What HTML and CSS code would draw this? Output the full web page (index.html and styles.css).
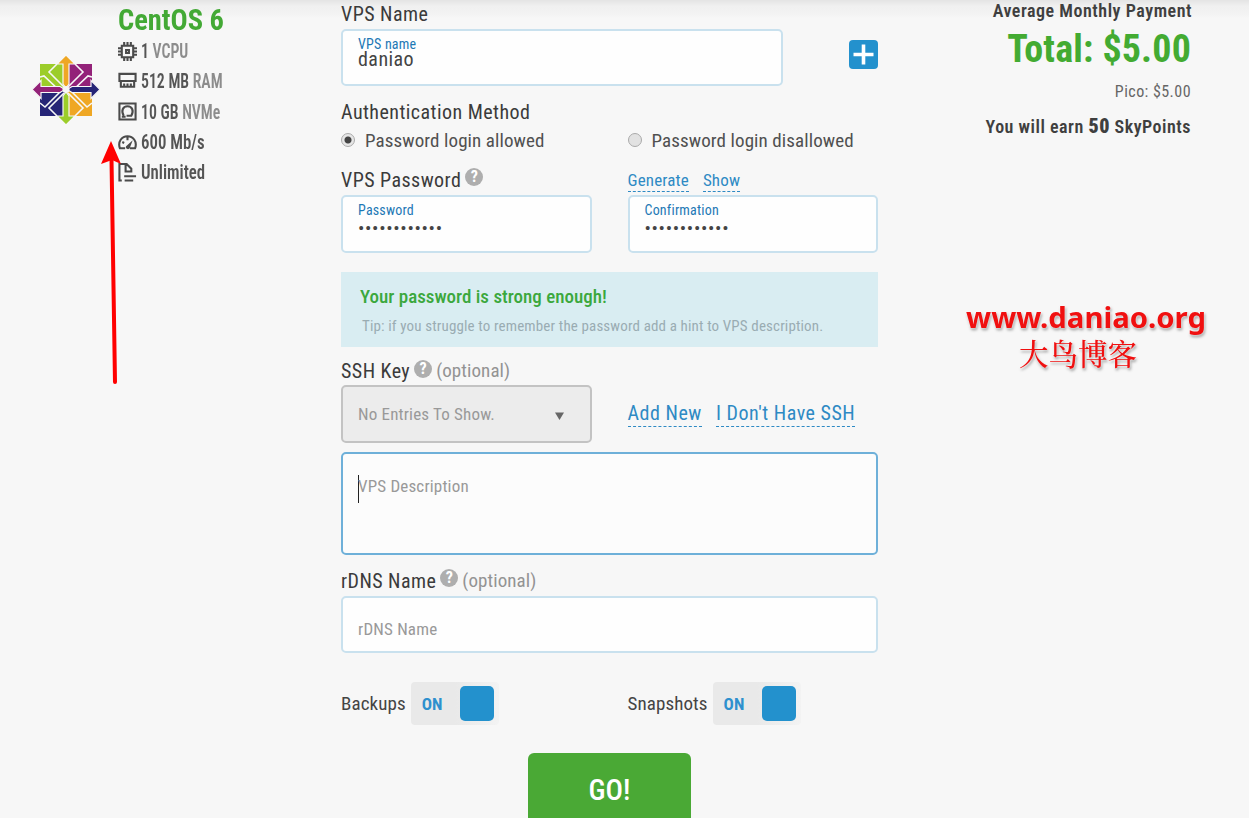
FILE: index.html
```html
<!DOCTYPE html>
<html lang="en">
<head>
<meta charset="utf-8">
<title>Order VPS</title>
<link rel="stylesheet" href="styles.css">
</head>
<body>
<div class="page">
  <aside class="config">
    <svg class="logo" viewBox="0 0 68 70">
      <path fill="#9ccd2a" d="M8 9h25v25H8z"/><path fill="#932279" d="M35 9h25v25H35z"/>
      <path fill="#262577" d="M8 36h25v25H8z"/><path fill="#efa724" d="M35 36h25v25H35z"/>
      <path fill="none" stroke="#f7f7f7" stroke-width="1.600" d="M25 9l-8 8 15 15M43 9l8 8-15 15M25 61l-8-8 15-15M43 61l8-8-15-15M8 22l4-1 16 15M60 22l-4-1-16 15M8 48l5 4 16-16M60 48l-5 4-16-16"/>
      <g stroke="#f7f7f7" stroke-width="1.2">
        <path fill="#efa724" d="M34 0l9 9h-6v20l-3 4-3-4V9h-6z"/>
        <path fill="#262577" d="M68 34.500l-9 9v-6H40l-5-3 5-3h19v-6z"/>
        <path fill="#9ccd2a" d="M34 70l9-9h-6V41l-3-4-3 4v20h-6z"/>
        <path fill="#932279" d="M0 34.500l9-9v6h19l5 3-5 3H9v6z"/>
      </g>
      <circle cx="34" cy="34.500" r="3.500" fill="#f7f7f7"/>
    </svg>
    <div class="specs">
      <h2>CentOS 6</h2>
      <div class="spec">
        <svg viewBox="0 0 20 20"><path fill="none" stroke="#4b4b4b" stroke-width="2.200" d="M4 4h12v12H4zM8.500 8.500h3v3h-3zM6.500 0v3M10 0v3M13.500 0v3M6.500 17v3M10 17v3M13.500 17v3M0 6.500h3M0 10h3M0 13.500h3M17 6.500h3M17 10h3M17 13.500h3"/></svg>
        <p><b>1</b> VCPU</p></div>
      <div class="spec">
        <svg viewBox="0 0 20 20"><path fill="none" stroke="#4b4b4b" stroke-width="2.200" d="M1.500 2h17v7.500h-17zM3 9v6.500h14V9M6.500 12v3M10 12v3M13.500 12v3"/></svg>
        <p><b>512 MB</b> RAM</p></div>
      <div class="spec">
        <svg viewBox="0 0 20 20"><path fill="none" stroke="#4b4b4b" stroke-width="2.200" d="M1.500 1.500h17v17h-17zM6 14.500c-3-5-1-10 4-10s7 5 4 10H9M4 15.500h4"/></svg>
        <p><b>10 GB</b> NVMe</p></div>
      <div class="spec">
        <svg viewBox="0 0 20 20"><path fill="none" stroke="#4b4b4b" stroke-width="2.200" d="M7.500 16H2C-.5 9 4 3.500 10 3.500S20.500 9 18 16h-5.500M4.500 9.500l2 1M10 4.500v3"/><path fill="#4b4b4b" d="M15.500 7.500l-3 8c-1 3-5.500 1-4-1.500z"/></svg>
        <p class="wide"><b>600 Mb/s</b></p></div>
      <div class="spec">
        <svg viewBox="0 0 20 20"><path fill="none" stroke="#4b4b4b" stroke-width="2.200" d="M4 18.500H1.500V1H9l5 5v3H8V1M6.500 14H19M7 18.500h9"/></svg>
        <p class="wide"><b>Unlimited</b></p></div>
    </div>
  </aside>

  <main class="form">
    <label class="label name-label">VPS Name</label>
    <div class="name-row">
      <div class="input"><small>VPS name</small><span class="value">daniao</span></div>
      <button class="add"><svg viewBox="0 0 29 29"><path d="M14.500 4.500v20M4.500 14.500h20" stroke="#fff" stroke-width="3.600"/></svg></button>
    </div>
    <label class="label auth-label">Authentication Method</label>
    <div class="two radios">
      <label><i class="radio on"></i>Password login allowed</label>
      <label><i class="radio"></i>Password login disallowed</label>
    </div>
    <div class="two pass-label">
      <div class="label">VPS Password<i class="help">?</i></div>
      <div class="links small"><a>Generate</a><a>Show</a></div>
    </div>
    <div class="two">
      <div class="input pass"><small>Password</small><span class="dots">••••••••••••</span></div>
      <div class="input pass"><small>Confirmation</small><span class="dots">••••••••••••</span></div>
    </div>
    <div class="alert"><p class="ok">Your password is strong enough!</p><p class="tip">Tip: if you struggle to remember the password add a hint to VPS description.</p></div>
    <div class="label ssh-label">SSH Key<i class="help">?</i><em>(optional)</em></div>
    <div class="two ssh">
      <div class="select"><span>No Entries To Show.</span><svg viewBox="0 0 9 8"><path fill="#666" d="M0 .5h9L4.500 8z"/></svg></div>
      <div class="links"><a>Add New</a><a>I Don't Have SSH</a></div>
    </div>
    <div class="area"><i class="caret"></i><span>VPS Description</span></div>
    <div class="label rdns-label">rDNS Name<i class="help">?</i><em>(optional)</em></div>
    <div class="input rdns"><span>rDNS Name</span></div>
    <div class="two toggles">
      <div class="toggle-row">Backups<div class="toggle"><b>ON</b><i></i></div></div>
      <div class="toggle-row">Snapshots<div class="toggle"><b>ON</b><i></i></div></div>
    </div>
    <button class="go">GO!</button>
  </main>

  <aside class="payment">
    <p class="avg">Average Monthly Payment</p>
    <p class="total">Total: $5.00</p>
    <p class="pico">Pico: $5.00</p>
    <p class="points">You will earn <b>50</b> SkyPoints</p>
  </aside>
</div>
<svg class="arrow" viewBox="0 0 20 244"><path d="M11.500 18L15 241" stroke="#f00" stroke-width="4" stroke-linecap="round"/><path fill="#f00" d="M11 0l10 23-9-4-11 4z"/></svg>
<div class="watermark"><div class="site">www.daniao.org</div><div class="cjk">大鸟博客</div></div>
</body>
</html>
```
FILE: styles.css
```css
* { box-sizing: border-box; margin: 0; padding: 0; }
body {
  width: 1249px; height: 818px; overflow: hidden; position: relative;
  background: linear-gradient(#e4e4e4 0, #f0f0f0 6px, #f3f3f3 14px, #f7f7f7 18px);
  font: 20px/24px "Roboto Condensed", Roboto, sans-serif;
  letter-spacing: .45px; color: #444; white-space: nowrap;
}
i, em { font-style: normal; }
.page { display: grid; grid-template-columns: 341px 537px 313px; }

.config { display: flex; align-items: flex-start; padding-left: 32px; }
.logo { width: 68px; height: 70px; margin-top: 55px; }
.specs { padding: 4px 0 0 18px; }
h2 { font-size: 29px; line-height: 32px; font-weight: 700; color: #43a935; letter-spacing: 0; transform: scaleX(.98); transform-origin: left; }
.spec { display: flex; align-items: center; height: 30.300px; gap: 4px; }
.spec svg { width: 19px; height: 19px; flex: none; }
.spec p { font-size: 21px; color: #8c8c8c; font-weight: 600; letter-spacing: 0; transform: scaleX(.75); transform-origin: left; }
.spec .wide { transform: scaleX(.8); }
.spec b { color: #555; font-weight: 600; }

.form { display: flex; flex-direction: column; }
.label { display: flex; align-items: center; height: 28px; color: #3b3b3b; }
.name-label { height: 29px; padding-bottom: 2px; }
.name-row { display: flex; justify-content: space-between; }
.input { height: 57px; background: #fefefe; border: 2px solid #c9e1ee; border-radius: 5px; padding: 6px 15px; }
.name-row .input { width: 442px; }
.input small { display: block; font-size: 14px; line-height: 15px; color: #1d78b5; letter-spacing: .2px; }
.value { display: block; line-height: 14px; }
.add { width: 29px; height: 29px; margin-top: 11px; border: 0; border-radius: 4px; background: #2391cd; }
.add svg { display: block; }
.auth-label { margin-top: 12px; }
.two { display: grid; grid-template-columns: 250.500px 250.500px; column-gap: 36px; }
.radios { height: 40px; align-items: center; padding-bottom: 10px; color: #505050; font-size: 19px; letter-spacing: .1px; }
.radios label { display: flex; align-items: center; }
.radio { width: 14px; height: 14px; margin: -3px 10px 0 0; border-radius: 50%; border: 1px solid #aaa; background: #e2e2e2; }
.radio.on { background: radial-gradient(#444 0 3px, #e6e6e6 4px); }
.pass-label { height: 29px; }
.help { width: 18px; height: 18px; margin: -7px 4px 0; border-radius: 50%; background: #aeaeae; color: #fff; font-size: 16px; line-height: 18px; font-weight: 700; text-align: center; letter-spacing: 0; }
.ssh-label .help { margin-top: -4px; }
.label em { color: #939393; font-size: 19px; letter-spacing: .1px; }
.links { display: flex; gap: 14px; align-items: center; }
.links a { color: #2e8ac4; line-height: 25px; border-bottom: 1px dashed #2e8ac4; letter-spacing: .52px; }
.links.small a { font-size: 17px; line-height: 22px; letter-spacing: .15px; }
.pass { height: 58px; }
.dots { display: block; font-size: 19px; line-height: 21px; letter-spacing: .65px; }
.alert { height: 75px; margin-top: 19px; padding: 12px 19px; background: #d9edf2; }
.ok { font-size: 19px; line-height: 25px; color: #3ba83d; font-weight: 500; letter-spacing: 0; }
.tip { font-size: 15px; line-height: 34px; color: #9aacb2; padding-left: 2px; letter-spacing: .14px; }
.ssh-label { height: 28px; margin-top: 10px; }
.select { display: flex; justify-content: space-between; align-items: center; height: 58px; border: 2px solid #c3c3c3; border-radius: 5px; background: #ececec; padding: 0 26px 0 15px; font-size: 17px; letter-spacing: .18px; color: #999; }
.select svg { width: 9px; height: 8px; margin-top: 4px; }
.area { display: flex; align-items: flex-start; height: 103px; margin-top: 9px; border: 2px solid #6eb0d9; border-radius: 5px; background: #fcfcfc; padding: 20px 15px; font-size: 17px; letter-spacing: .18px; color: #999; }
.caret { width: 1px; height: 28px; margin: 1px -1px 0 0; background: #222; }
.rdns-label { margin-top: 12px; }
.rdns { padding: 19px 15px; margin-top: 1px; color: #999; font-size: 17px; letter-spacing: .2px; }
.toggles { margin-top: 29px; }
.toggle-row { display: flex; align-items: center; height: 43px; gap: 5px; font-size: 19px; letter-spacing: .1px; }
.toggle { display: flex; align-items: center; justify-content: space-between; width: 88px; height: 43px; padding: 0 5px 0 11px; border-radius: 4px; background: linear-gradient(90deg, #e9e9e9 50%, #f3f3f3); }
.toggle b { font-size: 17px; color: #2e90ce; padding-top: 1px; }
.toggle i { width: 34px; height: 35px; border-radius: 5px; background: #2391cd; }
.go { align-self: center; width: 163px; height: 74px; margin-top: 28px; border: 0; border-radius: 6px; background: #4aa935; color: #fff; font: 500 29px "Roboto Condensed", Roboto, sans-serif; }

.payment { text-align: right; color: #3f3f3f; }
.avg { font-size: 18px; font-weight: 600; line-height: 22px; letter-spacing: .52px; margin-right: -1px; }
.total { font-size: 38px; font-weight: 700; line-height: 50px; padding-top: 2px; height: 50px; color: #43ab32; letter-spacing: .15px; }
.pico { font-size: 16px; line-height: 38px; color: #666; padding-top: 1px; height: 38px; }
.points { font-size: 18px; font-weight: 600; line-height: 33px; letter-spacing: .5px; }
.points b { font-size: 20px; }

.arrow { position: absolute; left: 100px; top: 141px; width: 20px; height: 244px; overflow: visible; }
.watermark { position: absolute; left: 965px; top: 299px; width: 242px; text-align: center; color: #f01010; letter-spacing: 0; filter: drop-shadow(0 0 1px #fff) drop-shadow(1px 2px 1px #aaa); }
.site { font: 700 29.300px/36px "Noto Sans", sans-serif; }
.cjk { font: 500 29.500px/34px "Noto Serif CJK SC", "Noto Sans CJK SC", serif; padding-right: 16px; }
```
